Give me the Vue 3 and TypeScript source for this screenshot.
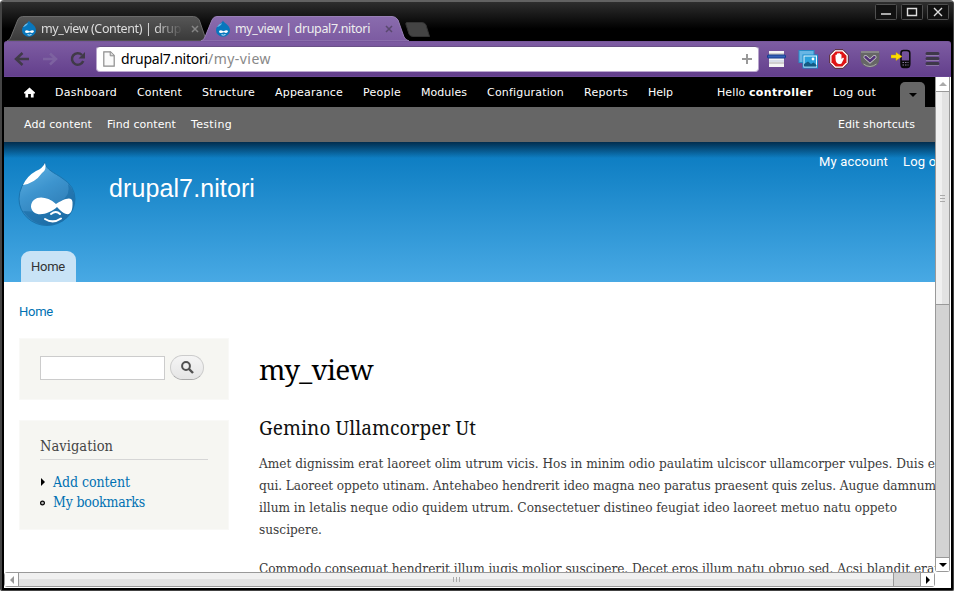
<script setup lang="ts">
interface Label { text: string; w: number }

const menu: Label[] = [
  { text: 'Dashboard', w: 62 },
  { text: 'Content', w: 45 },
  { text: 'Structure', w: 53 },
  { text: 'Appearance', w: 68 },
  { text: 'People', w: 38 },
  { text: 'Modules', w: 46 },
  { text: 'Configuration', w: 77 },
  { text: 'Reports', w: 44 },
  { text: 'Help', w: 25 },
]
const shortcuts: Label[] = [
  { text: 'Add content', w: 68 },
  { text: 'Find content', w: 69 },
  { text: 'Testing', w: 41 },
]
const tabs = [
  { text: 'my_view (Content) | drup', w: 140, active: false },
  { text: 'my_view | drupal7.nitori', w: 135, active: true },
]
const lines: Label[] = [
  { text: 'Amet dignissim erat laoreet olim utrum vicis. Hos in minim odio paulatim ulciscor ullamcorper vulpes. Duis e', w: 676 },
  { text: 'qui. Laoreet oppeto utinam. Antehabeo hendrerit ideo magna neo paratus praesent quis zelus. Augue damnum', w: 677 },
  { text: 'illum in letalis neque odio quidem utrum. Consectetuer distineo feugiat ideo laoreet metuo natu oppeto', w: 638 },
  { text: 'suscipere.', w: 63 },
]
const nextLine: Label = {
  text: 'Commodo consequat hendrerit illum jugis molior suscipere. Decet eros illum natu obruo sed. Acsi blandit erat',
  w: 680,
}

// Tracks a label out or in so that it spans the given number of pixels.
const vFit = {
  mounted(el: HTMLElement, binding: { value: number }) {
    const natural = el.getBoundingClientRect().width
    const count = (el.textContent ?? '').length
    const spacing = (binding.value - natural) / count
    el.style.letterSpacing = `${spacing.toFixed(3)}px`
  },
}
</script>

<template>
  <div class="window">
    <header class="titlebar">
      <div class="tabs">
        <div v-for="t in tabs" :key="t.text" class="tab" :class="{ active: t.active }">
          <svg class="tab-shape" viewBox="0 0 208 25" preserveAspectRatio="none">
            <defs>
              <linearGradient id="tabOn" x1="0" y1="0" x2="0" y2="1"><stop offset="0" stop-color="#8a6cae" /><stop offset="1" stop-color="#7c5ba1" /></linearGradient>
              <linearGradient id="tabOff" x1="0" y1="0" x2="0" y2="1"><stop offset="0" stop-color="#565656" /><stop offset="1" stop-color="#393939" /></linearGradient>
            </defs>
            <path d="M0 25 Q3 24 4 21 L11 4 Q12.500 .5 16 .5 H191 Q195 .5 197 4 L203 21 Q204.500 24 208 25Z" :fill="t.active ? 'url(#tabOn)' : 'url(#tabOff)'" :stroke="t.active ? '#9880b6' : '#6b6b6b'" />
          </svg>
          <svg class="favicon" viewBox="0 0 16 17">
            <path d="M8 .5 C8.500 3 15 5 15 10.200 A7 6.500 0 0 1 1 10.200 C1 5.500 6.500 4 8 .5Z" fill="#0877bd" />
            <path d="M2 7 Q3.500 4 7 3 Q6 6 2 7Z" fill="#6bbdeb" />
            <path d="M4 12 Q4 9 8.500 11.200 Q12.500 9 13 11.500 Q12 13.800 9 12.300 Q5 14 4 12Z" fill="#fff" />
            <path d="M6.500 14.700 Q8.500 15.600 10.500 14.500" fill="none" stroke="#d9efff" />
          </svg>
          <span class="tab-name"><span v-fit="t.w" class="fit">{{ t.text }}</span></span>
          <svg class="tab-x" viewBox="0 0 8 8"><path d="M1 1 L7 7 M7 1 L1 7" /></svg>
        </div>
        <svg class="newtab" viewBox="0 0 25 15"><path d="M2 .5 H17 Q20 .5 21 3 L24.500 14.500 H8 Q5 14.500 4 12 L.8 2 Q.5 .5 2 .5Z" fill="#444" stroke="#343434" /></svg>
      </div>
      <div class="controls">
        <svg viewBox="0 0 22 16"><rect x=".5" y=".5" width="21" height="15" rx="1" /><path d="M6 10 H16" stroke-width="2" /></svg>
        <svg viewBox="0 0 22 16"><rect x=".5" y=".5" width="21" height="15" rx="1" /><path d="M6.500 4.500 H15.500 V11.500 H6.500Z M6 4.500 H16" /></svg>
        <svg viewBox="0 0 22 16"><rect x=".5" y=".5" width="21" height="15" rx="1" /><path d="M7 4 L15 12 M15 4 L7 12" stroke-width="1.600" /></svg>
      </div>
    </header>

    <div class="toolbar">
      <svg class="nav-ico" viewBox="0 0 16 16"><path d="M15 8 H3 M8.500 2 L2 8 L8.500 14" /></svg>
      <svg class="nav-ico forward" viewBox="0 0 16 16"><path d="M1 8 H13 M8 2.500 L14 8 L8 13.500" /></svg>
      <svg class="nav-ico reload" viewBox="0 0 16 16"><path d="M13.200 10 A5.800 5.800 0 1 1 12 4" /><path d="M15 1 V7.500 H8.500Z" class="solid" /></svg>
      <div class="address">
        <svg class="page-ico" viewBox="0 0 12 16"><path d="M.8 .8 H7.500 L11.200 4.500 V15.200 H.8Z" fill="#fafafa" stroke="#8c8c8c" stroke-width="1.200" /><path d="M7.200 .8 V4.800 H11" fill="#ddd" stroke="#8c8c8c" /></svg>
        <span class="url"><span v-fit="87" class="fit host">drupal7.nitori</span><span v-fit="63" class="fit">/my-view</span></span>
        <svg class="plus" viewBox="0 0 10 10"><path d="M5 0 V10 M0 5 H10" /></svg>
      </div>
      <div class="extensions">
        <svg viewBox="0 0 20 20"><rect x="2" y="2" width="15" height="16" fill="#f4f4f4" /><path d="M2 5 H17 M2 14 H17" stroke="#aaa" /><rect x=".5" y="6" width="18" height="3" rx="1" fill="#3460b8" stroke="#173c8a" /><path d="M2 12 H17" stroke="#bdc9df" /></svg>
        <svg viewBox="0 0 20 20"><rect x="1" y="1.500" width="15" height="12" fill="#68b6e4" stroke="#268bc5" /><rect x="5" y="6" width="14.500" height="13" fill="#e9f8ff" stroke="#178bcc" /><rect x="6.500" y="7.500" width="11.500" height="10" fill="#2ba1dc" /><path d="M6 17.500 V15 L10 12.500 L13 15 L15.500 13.500 L18.500 16 V17.500Z" fill="#145982" /><circle cx="15" cy="10" r="1.400" fill="#fff" /></svg>
        <svg viewBox="0 0 20 20"><path d="M6 .7 H14 L19.300 6 V14 L14 19.300 H6 L.7 14 V6Z" fill="#fff" stroke="#54252e" /><path d="M6.700 2.500 H13.300 L17.500 6.700 V13.300 L13.300 17.500 H6.700 L2.500 13.300 V6.700Z" fill="#df1515" /><path d="M6.500 9 V6 Q7.200 5 7.900 6 V4.800 Q8.700 3.800 9.400 4.800 V4.300 Q10.200 3.500 11 4.500 V5.300 Q12 4.600 12.500 5.800 V10 L14 8.600 L15 9.500 L12.500 14.500 Q9.500 16 7.500 13.500 Q6.500 12 6.500 9Z" fill="#fff" /></svg>
        <svg viewBox="0 0 20 20"><path d="M.5 3.500 Q.5 2 2 2 H18 Q19.500 2 19.500 3.500 V9 Q19.500 18 10 18.500 Q.5 18 .5 9Z" fill="#666" /><path d="M1 3 H19 M3.500 15 Q10 20 16.500 15" fill="none" stroke="#aaa" /><path d="M5.500 8 L10 12 L14.500 8" fill="none" stroke="#d0d0d0" stroke-width="4" stroke-linecap="round" /><path d="M5.500 8 L10 12 L14.500 8" fill="none" stroke="#533279" stroke-width="2.500" stroke-linecap="round" /></svg>
        <svg viewBox="0 0 20 20"><path d="M10 11 V4 Q10 1.500 12.500 1.500 H16 Q18.800 1.500 18.800 4 V15 Q18.800 18.500 16 18.500 H12.500 Q10 18.500 10 15Z" fill="none" stroke="#090909" stroke-width="1.500" /><path d="M10 11.500 H19 V18 H10Z" fill="#090909" /><path d="M11.500 13.500 H17.500 M11.500 16 H17.500" stroke="#887a9d" stroke-dasharray="1.500 1" /><path d="M0 6 H5 V3.500 L11 7.500 L5 11.500 V9 H0Z" fill="#ffdc00" stroke="#cba400" stroke-width=".5" /></svg>
        <svg viewBox="0 0 20 20"><path d="M5 4.500 H16 M5 9.500 H16 M5 14.500 H16" stroke="#3e3849" stroke-width="3" stroke-linecap="round" /><path d="M4 6.500 H17 M4 11.500 H17 M4 16.500 H17" stroke="#a293b5" stroke-width=".6" /></svg>
      </div>
    </div>

    <div class="body">
      <main class="page">
        <nav class="admin">
          <svg class="house" viewBox="0 0 12 11"><path d="M6 0 L12 5.500 V6.500 H10.500 V11 H7.500 V7 H4.500 V11 H1.500 V6.500 H0 V5.500Z" fill="#fff" /></svg>
          <span v-for="m in menu" :key="m.text" v-fit="m.w" class="fit">{{ m.text }}</span>
          <div class="user">
            <span><span v-fit="32" class="fit">Hello&nbsp;</span><b v-fit="64" class="fit">controller</b></span>
            <span v-fit="43" class="fit">Log out</span>
          </div>
          <div class="toggle"><i></i></div>
        </nav>
        <nav class="shortcuts">
          <span v-for="s in shortcuts" :key="s.text" v-fit="s.w" class="fit">{{ s.text }}</span>
          <span v-fit="77" class="fit edit">Edit shortcuts</span>
        </nav>
        <section class="branding">
          <svg class="logo" viewBox="0 0 58 65">
            <defs>
              <linearGradient id="drop" x1="0" y1="0" x2=".5" y2="1"><stop offset="0" stop-color="#68b8e7" /><stop offset=".5" stop-color="#3d94ce" /><stop offset="1" stop-color="#2c79b2" /></linearGradient>
            </defs>
            <path d="M26.500 1 C28 9 37 12 44 17 Q57 25 57 38 A28 26.500 0 0 1 1 38 Q1 24 13 15 C20 10 26 8 26.500 1Z" fill="url(#drop)" stroke="#1b74ae" />
            <path d="M50 23 Q53 34 43 40 L38 44 Q25 52 5 50 Q14 63.500 30 64 Q54 62 56.500 40 Q57 29 50 23Z" fill="#1467a2" opacity=".55" />
            <path d="M5 24 Q9 15 18 10 Q25 7 27 2 Q29 9 24 12 Q17 22 5 24Z" fill="#fff" />
            <path d="M13 46 C13 35 27 33 38 43 C44 39 54 34 54.500 41 C55 54 50 58 39 46 C32 53 15 58 13 46Z" fill="#fff" />
            <path d="M27 58 Q35 63 43 57.500 M33 53 Q38 49 42 53" fill="none" stroke="#fff" stroke-width="2" stroke-linecap="round" />
          </svg>
          <h1 class="site"><span v-fit="146" class="fit">drupal7.nitori</span></h1>
          <div class="account"><span v-fit="69" class="fit">My account</span><span v-fit="45" class="fit">Log out</span></div>
          <div class="hometab"><span v-fit="34" class="fit">Home</span></div>
        </section>
        <div class="crumb"><span v-fit="34" class="fit">Home</span></div>
        <div class="columns">
          <aside>
            <form class="block search" @submit.prevent>
              <input type="text" aria-label="Search">
              <button type="submit" aria-label="Search"><svg viewBox="0 0 13 13"><circle cx="5" cy="5" r="3.900" fill="none" stroke="#505050" stroke-width="2" /><path d="M8 8 L12 12" stroke="#505050" stroke-width="2.400" /></svg></button>
            </form>
            <div class="block links">
              <h2><span v-fit="73" class="fit">Navigation</span></h2>
              <div class="link"><svg viewBox="0 0 6 8"><path d="M1 0 L5 4 L1 8Z" /></svg><a v-fit="77" class="fit">Add content</a></div>
              <div class="link"><svg viewBox="0 0 6 8"><circle cx="2.500" cy="5" r="1.900" fill="#bbb" stroke="#000" stroke-width="1.200" /></svg><a v-fit="92" class="fit">My bookmarks</a></div>
            </div>
          </aside>
          <article>
            <h1><span v-fit="114" class="fit">my_view</span></h1>
            <h2><span v-fit="217" class="fit">Gemino Ullamcorper Ut</span></h2>
            <div class="para"><div v-for="l in lines" :key="l.text"><span v-fit="l.w" class="fit">{{ l.text }}</span></div></div>
            <div class="para"><span v-fit="nextLine.w" class="fit">{{ nextLine.text }}</span></div>
          </article>
        </div>
      </main>

      <div class="vbar">
        <div class="arrow"><i class="up"></i></div>
        <div class="thumb"><i></i><i></i><i></i></div>
        <div class="arrow end"><i class="down"></i></div>
      </div>
      <div class="hbar">
        <div class="arrow"><i class="left"></i></div>
        <div class="thumb"><i></i><i></i><i></i></div>
        <div class="arrow end"><i class="right"></i></div>
      </div>
      <div class="corner"></div>
    </div>
  </div>
</template>

<style>
body { margin: 0; overflow: hidden; background: #fff; }
</style>

<style scoped>
* { box-sizing: border-box; }
svg { display: block; flex: none; }
.fit { display: inline-block; white-space: nowrap; }
h1, h2 { margin: 0; font-weight: 400; }

.window { width: 954px; height: 591px; display: flex; flex-direction: column; padding: 0 2px 2px; background: #000; border: solid #444; border-width: 2px 1px 1px 2px; border-top-color: #626262; border-radius: 4px 4px 2px 2px; overflow: hidden; }

.titlebar { height: 39px; flex: none; display: flex; align-items: flex-end; justify-content: space-between; margin: 0 -2px; background: linear-gradient(#2e2e2e, #000 27px); }
.tabs { display: flex; align-items: flex-end; padding-left: 5px; }
.tab { position: relative; width: 203px; height: 25px; display: flex; align-items: center; padding: 0 11px 0 14px; font: 12.5px "Noto Sans", sans-serif; color: #ddd; }
.tab.active { width: 208px; margin-left: -9px; z-index: 1; color: #eee; padding-right: 16px; padding-left: 14px; }
.tab-shape { position: absolute; inset: 0; width: 100%; height: 100%; }
.favicon { position: relative; width: 16px; height: 17px; }
.tab-name { position: relative; margin-left: 4px; width: 142px; overflow: hidden; line-height: 20px; }
.tab:not(.active) .tab-name { mask-image: linear-gradient(90deg, #000 80%, transparent); }
.tab-x { position: relative; width: 8px; height: 8px; margin-left: auto; }
.tab-x path { stroke: #858585; stroke-width: 1.5; }
.active .tab-x path { stroke: #59486e; }
.newtab { width: 25px; height: 15px; margin: 0 0 4px -4px; }
.controls { display: flex; gap: 4px; align-self: flex-start; padding: 2px 4px 0 0; }
.controls svg { width: 22px; height: 16px; }
.controls rect { fill: #111; stroke: #505050; }
.controls path { fill: none; stroke: #ddd; stroke-width: 1.4; }

.toolbar { height: 36px; flex: none; display: flex; align-items: center; padding: 0 8px 0 10px; background: linear-gradient(#7d5ca2, #633f8c); border-bottom: 1px solid #6a4794; border-top: 1px solid #76569b; border-radius: 3px 3px 0 0; }
.nav-ico { width: 16px; height: 16px; margin-right: 12px; }
.nav-ico path { fill: none; stroke: #403a48; stroke-width: 2.5; }
.nav-ico.forward path { stroke: #7d62a0; }
.nav-ico.reload { margin-right: 10px; }
.nav-ico .solid { fill: #403a48; stroke: none; }
.address { width: 663px; height: 26px; display: flex; align-items: center; padding: 0 7px; background: #fff; border: 1px solid #c6b9d5; border-color: #6a5287 #b8a5cc #bda9d1; border-radius: 4px; }
.page-ico { width: 12px; height: 16px; margin-left: -1px; }
.url { flex: 1; margin-left: 6px; font: 14px/22px "Noto Sans", sans-serif; color: #888; white-space: nowrap; display: flex; }
.host { color: #000; }
.plus { width: 10px; height: 10px; margin-right: -1px; }
.plus path { stroke: #999; stroke-width: 2; }
.extensions { display: flex; gap: 11px; margin-left: 8px; }
.extensions svg { width: 20px; height: 20px; }

.body { flex: 1; min-height: 0; display: grid; grid-template: 495px 15px / 931px 15px; background: #fff; }
.page { overflow: hidden; background: #fff; font-family: "Liberation Sans", sans-serif; }

.admin { height: 30px; display: flex; align-items: center; gap: 20px; padding: 0 10px 0 20px; background: #000; color: #fff; font: 11px "DejaVu Sans", sans-serif; }
.house { width: 11px; height: 11px; }
.user { margin-left: auto; display: flex; gap: 20px; }
.toggle { width: 25px; height: 25px; align-self: flex-end; display: grid; place-items: center; margin-left: 4px; background: #666; border-radius: 5px 5px 0 0; }
.toggle i { border: 4px solid transparent; border-top-color: #000; border-bottom: 0; }
.shortcuts { height: 35px; display: flex; align-items: center; gap: 15px; padding: 0 20px; background: #666; color: #fff; font: 11px "DejaVu Sans", sans-serif; }
.edit { margin-left: auto; }

.branding { height: 140px; display: grid; grid-template: 109px 31px / 105px 1fr auto; background: linear-gradient(rgba(0, 20, 40, .75), transparent 16px), linear-gradient(#0779bf, #48a9e4); }
.logo { width: 58px; height: 65px; margin: 19px 0 0 14px; align-self: start; }
.site { margin-top: 31px; font-size: 25px; line-height: 30px; color: #fff; }
.account { display: flex; gap: 15px; height: 20px; margin: 10px -13px 0 0; font: 13px/20px Roboto, sans-serif; color: #fff; }
.hometab { width: 55px; margin-left: 17px; padding-left: 10px; background: #c8e3f6; border-radius: 9px 9px 0 0; font: 13px/31px Roboto, sans-serif; color: #333; }
.crumb { height: 56px; padding: 20px 15px 0; font: 13px/20px Roboto, sans-serif; color: #0071b3; }

.columns { display: grid; grid-template-columns: 210px 1fr; column-gap: 30px; padding-left: 15px; }
.block { background: #f6f6f2; margin-bottom: 20px; border: 1px solid #f9f9f7; padding: 0 20px; }
.search { height: 62px; display: flex; align-items: flex-start; gap: 5px; padding-top: 16px; }
.search input { width: 125px; height: 24px; margin: 1px 0 0; padding: 0 4px; border: 1px solid #ccc; background: #fff; }
.search button { width: 34px; height: 25px; display: grid; place-items: center; padding: 0; border: 1px solid #ccc; border-bottom-color: #aaa; border-radius: 13px; background: linear-gradient(#f5f5f5, #e5e5e5); }
.search button svg { width: 13px; height: 13px; }
.links { height: 110px; font-family: "DejaVu Serif Condensed", "DejaVu Serif", serif; font-stretch: condensed; }
.links h2 { height: 39px; padding-top: 13px; margin-bottom: 12px; border-bottom: 1px solid #d6d6d6; font-size: 14.5px; line-height: 24px; color: #444; }
.link { display: flex; align-items: center; height: 20px; gap: 7px; font-size: 14px; line-height: 20px; color: #0071b3; }
.link svg { width: 6px; height: 8px; }

article { font-family: "DejaVu Serif Condensed", "DejaVu Serif", serif; font-stretch: condensed; color: #3b3b3b; white-space: nowrap; }
article h1 { height: 53px; padding-top: 10px; font: 28px/42px "Noto Serif", "Liberation Serif", serif; color: #000; }
article h2 { height: 24px; margin-top: 25px; font: 19px/24px "Noto Serif", "Liberation Serif", serif; color: #111; }
.para { margin: 12px 0 17px; font-size: 13.5px; line-height: 22px; }

.vbar, .hbar { display: flex; background: #d3d3d3; border: 1px solid #999; }
.vbar { flex-direction: column; border-top: 0; border-radius: 0 0 3px 3px; }
.hbar { border-radius: 3px; }
.arrow { width: 13px; height: 14px; display: grid; place-items: center; flex: none; background: #fff; }
.arrow i { border: 4px solid transparent; }
.arrow .up { border-bottom-color: #aaa; border-top: 0; }
.arrow .down { border-top-color: #000; border-bottom: 0; }
.arrow .left { border-right-color: #999; border-left: 0; }
.arrow .right { border-left-color: #000; border-right: 0; }
.thumb { display: flex; align-items: center; justify-content: center; gap: 2px; }
.thumb i { background: #aaa; }
.vbar .thumb { height: 214px; flex-direction: column; border: solid #999; border-width: 1px 0; background: linear-gradient(90deg, #f0f0f0 50%, #e2e2e2 50%); }
.vbar .thumb i { width: 5px; height: 1px; }
.vbar .end { margin-top: auto; border-top: 1px solid #999; }
.hbar .arrow { height: 13px; width: 13px; }
.hbar .thumb { width: 876px; border: solid #999; border-width: 0 1px; background: linear-gradient(#f0f0f0 50%, #e2e2e2 50%); }
.hbar .thumb i { width: 1px; height: 5px; }
.hbar .end { margin-left: auto; border-left: 1px solid #999; }
.hbar .arrow.end { width: 14px; }
.corner { background: #fff; }
</style>
